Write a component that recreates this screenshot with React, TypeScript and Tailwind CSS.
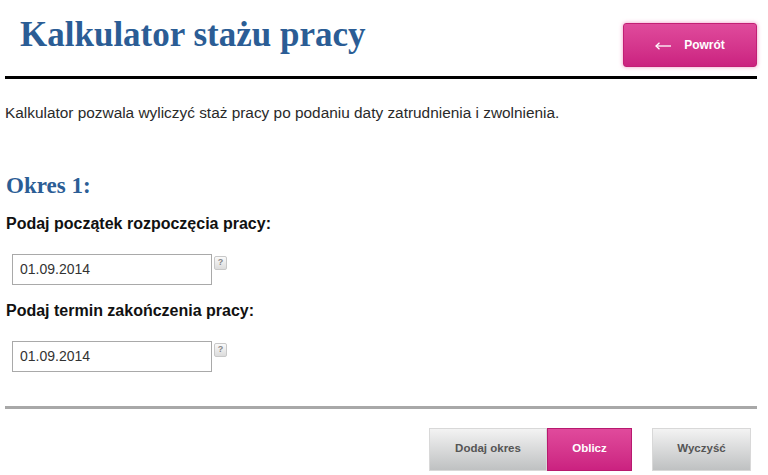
import React from 'react';

const DateField = ({ value }: { value: string }) => (
  <div className="flex items-start pl-3">
    <input
      readOnly
      value={value}
      className="w-[200px] h-[31px] border border-[#a9a9a9] bg-white px-[7px] text-[14px] text-[#333] outline-none"
    />
    <span className="ml-[2px] mt-[2px] flex h-[14px] w-[13px] items-center justify-center rounded-[2px] border border-[#c8c8c8] bg-gradient-to-b from-[#fafafa] to-[#dcdcdc] text-[9px] font-bold leading-none text-[#888]">
      ?
    </span>
  </div>
);

const GrayButton = ({ label, className = '' }: { label: string; className?: string }) => (
  <button
    className={`h-[43px] border border-[#d8d8d8] bg-gradient-to-b from-[#f3f3f3] to-[#bfc1c2] text-[11.5px] font-bold text-[#555] ${className}`}
  >
    {label}
  </button>
);

const App = () => {
  return (
    <div className="h-[475px] w-[768px] overflow-hidden bg-white font-['Liberation_Sans',Arial,sans-serif] text-[#222]">
      {/* Header */}
      <div className="flex h-[67px] items-start justify-between px-[5px] pr-[11px]">
        <h1 className="ml-[15px] mt-[13px] font-['Liberation_Serif','Times_New_Roman',serif] text-[35px] font-bold leading-[44px] text-[#2b5d95]">
          Kalkulator stażu pracy
        </h1>
        <button className="mt-[23px] flex h-[44px] w-[134px] items-center justify-center gap-[13px] rounded-[3px] border border-[#c21f75] bg-gradient-to-b from-[#e04a9c] to-[#cb2180] text-[12px] font-bold text-white shadow-[0_0_4px_rgba(230,80,160,0.6)]">
          <svg width="16" height="8" viewBox="0 0 16 8" className="mt-[1px]">
            <path d="M1 4H16" stroke="white" strokeWidth="1.3" />
            <path d="M4.5 0.8L1 4L4.5 7.2" stroke="white" strokeWidth="1.3" fill="none" />
          </svg>
          <span>Powrót</span>
        </button>
      </div>
      <div className="mx-[5px] mt-[9px] h-[2.5px] w-[752px] bg-black" />

      <p className="mt-[24px] px-[5px] text-[15.4px] leading-[20px] text-[#2a2a2a]">
        Kalkulator pozwala wyliczyć staż pracy po podaniu daty zatrudnienia i zwolnienia.
      </p>

      {/* Okres */}
      <h2 className="mt-[49px] px-[6px] font-['Liberation_Serif','Times_New_Roman',serif] text-[23px] font-bold leading-[28px] text-[#2b5d95]">
        Okres 1:
      </h2>
      <p className="mt-[14px] px-[6px] text-[16px] font-bold leading-[20px] text-[#111]">
        Podaj początek rozpoczęcia pracy:
      </p>
      <div className="mt-[20px]">
        <DateField value="01.09.2014" />
      </div>
      <p className="mt-[16px] px-[6px] text-[16px] font-bold leading-[20px] text-[#111]">
        Podaj termin zakończenia pracy:
      </p>
      <div className="mt-[20px]">
        <DateField value="01.09.2014" />
      </div>

      <div className="mx-[5px] mt-[34px] h-[3px] w-[752px] bg-[#a8a8a8]" />

      {/* Actions */}
      <div className="mt-[19px] flex justify-end pr-[17px]">
        <GrayButton label="Dodaj okres" className="w-[118px]" />
        <button className="h-[43px] w-[85px] border border-[#b8196f] bg-gradient-to-b from-[#e04a9c] to-[#cb2180] text-[11.5px] font-bold text-white">
          Oblicz
        </button>
        <GrayButton label="Wyczyść" className="ml-[20px] w-[99px]" />
      </div>
    </div>
  );
};

export default App;
